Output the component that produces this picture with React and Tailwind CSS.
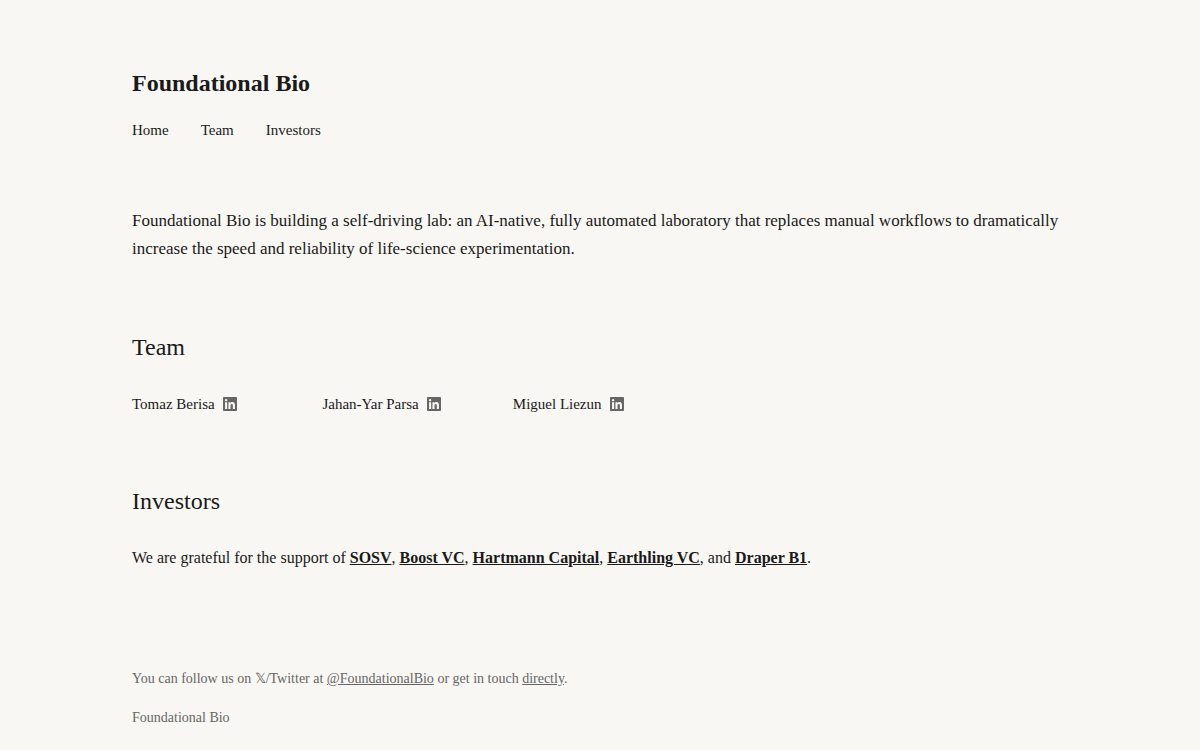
const navLinks = [
  { href: '#home', label: 'Home' },
  { href: '#team', label: 'Team' },
  { href: '#investors', label: 'Investors' },
];

const team = ['Tomaz Berisa', 'Jahan-Yar Parsa', 'Miguel Liezun'];

function LinkedInIcon() {
  return (
    <svg viewBox="0 0 24 24" className="h-[14px] w-[14px]" fill="currentColor" aria-hidden="true">
      <path d="M20.447 20.452h-3.554v-5.569c0-1.328-.027-3.037-1.852-3.037-1.853 0-2.136 1.445-2.136 2.939v5.667H9.351V9h3.414v1.561h.046c.477-.900 1.637-1.850 3.370-1.850 3.601 0 4.267 2.370 4.267 5.455v6.286zM5.337 7.433a2.062 2.062 0 0 1-2.063-2.065 2.064 2.064 0 1 1 2.063 2.065zm1.782 13.019H3.555V9h3.564v11.452zM22.225 0H1.771C.792 0 0 .774 0 1.729v20.542C0 23.227.792 24 1.771 24h20.451C23.200 24 24 23.227 24 22.271V1.729C24 .774 23.200 0 22.222 0h.003z" />
    </svg>
  );
}

function InvestorLink({ children }) {
  return (
    <a href="#investors" className="font-bold underline">
      {children}
    </a>
  );
}

export default function App() {
  return (
    <div className="min-h-screen bg-[#f9f7f3] font-['Liberation_Serif',serif] text-[#1a1a1a]">
      <div className="mx-auto max-w-[1000px] px-8 pt-16 pb-5">
        <header id="home" className="mb-16">
          <h1 className="mb-4 text-2xl leading-[38px] font-bold">Foundational Bio</h1>
          <nav className="flex gap-8 text-[15px] leading-[25px]">
            {navLinks.map(({ href, label }) => (
              <a key={label} href={href}>
                {label}
              </a>
            ))}
          </nav>
        </header>

        <main>
          <p className="mb-16 text-[17px] leading-7">
            Foundational Bio is building a self-driving lab: an AI-native, fully automated laboratory that replaces
            manual workflows to dramatically increase the speed and reliability of life-science experimentation.
          </p>

          <section id="team" className="mb-16">
            <h2 className="mb-6 text-2xl leading-10">Team</h2>
            <ul className="grid grid-cols-[repeat(auto-fill,minmax(150px,1fr))] gap-4 text-[15px] leading-[26px]">
              {team.map((name) => (
                <li key={name} className="flex items-center gap-2">
                  {name}
                  <a href="#team" aria-label={`${name} on LinkedIn`} className="text-[#666666]">
                    <LinkedInIcon />
                  </a>
                </li>
              ))}
            </ul>
          </section>

          <section id="investors">
            <h2 className="mb-6 text-2xl leading-10">Investors</h2>
            <p className="text-base leading-[26px]">
              We are grateful for the support of <InvestorLink>SOSV</InvestorLink>,{' '}
              <InvestorLink>Boost VC</InvestorLink>, <InvestorLink>Hartmann Capital</InvestorLink>,{' '}
              <InvestorLink>Earthling VC</InvestorLink>, and <InvestorLink>Draper B1</InvestorLink>.
            </p>
          </section>
        </main>

        <footer className="mt-24 text-[14px] leading-[23px] text-[#666666]">
          <p className="mb-4">
            You can follow us on 𝕏/Twitter at{' '}
            <a href="#twitter" className="underline">
              @FoundationalBio
            </a>{' '}
            or get in touch{' '}
            <a href="#contact" className="underline">
              directly
            </a>
            .
          </p>
          <p>Foundational Bio</p>
        </footer>
      </div>
    </div>
  );
}
